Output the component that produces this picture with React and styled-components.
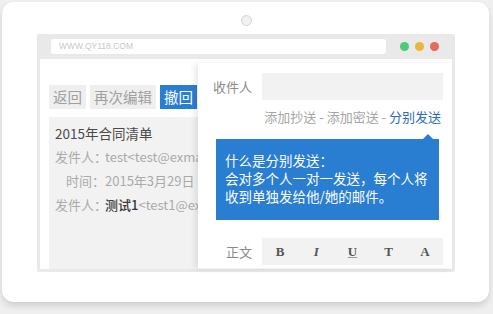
import React from "react";
import styled, { createGlobalStyle } from "styled-components";

const Global = createGlobalStyle`
  html, body { margin: 0; padding: 0; background: #efefef; }
  body {
    font-family: "Noto Sans CJK SC", "Liberation Sans", sans-serif;
    text-spacing-trim: space-all;
  }
  * { box-sizing: border-box; }
`;

const Page = styled.div`
  width: 493px;
  height: 314px;
  padding: 2px 4px 0 2px;
`;

const Device = styled.div`
  width: 487px;
  height: 300px;
  background: #fff;
  border-radius: 12px;
  box-shadow: 0 4px 6px rgba(0, 0, 0, 0.13);
  display: flex;
  flex-direction: column;
  align-items: flex-start;
  padding: 13px 0 0 35px;
`;

const Camera = styled.div`
  width: 11px;
  height: 11px;
  border-radius: 50%;
  background: #f1f1f1;
  border: 1px solid #d4d4d4;
  margin-left: 204px;
`;

const Frame = styled.div`
  margin-top: 8px;
  width: 418px;
  height: 238px;
  background: #e9e9e9;
  border-radius: 2px;
  padding: 0 3px 3px;
  display: flex;
  flex-direction: column;
`;

const TopBar = styled.div`
  height: 25px;
  display: flex;
  align-items: center;
  padding: 0 13px 0 11px;
`;

const Url = styled.div`
  width: 335px;
  height: 15px;
  background: #fff;
  border-radius: 3px;
  color: #c8c8c8;
  font-family: "Liberation Sans", sans-serif;
  font-size: 8.5px;
  line-height: 15px;
  padding-left: 8px;
`;

const Dots = styled.div`
  margin-left: auto;
  display: flex;
  gap: 6px;
`;

const Dot = styled.span`
  width: 9px;
  height: 9px;
  border-radius: 50%;
  background: ${(p) => p.$c};
`;

const Content = styled.div`
  flex: 1;
  background: #fff;
  display: flex;
  min-height: 0;
`;

const LeftPane = styled.div`
  width: 158px;
  flex: none;
  overflow: hidden;
  padding: 26px 0 0 9px;
  display: flex;
  flex-direction: column;
`;

const Buttons = styled.div`
  display: flex;
  gap: 4px;
`;

const Btn = styled.div`
  height: 24px;
  padding: 0 4px;
  font-size: 14.5px;
  line-height: 24px;
  background: ${(p) => (p.$primary ? "#2a7ed2" : "#efefef")};
  color: ${(p) => (p.$primary ? "#fff" : "#a0a0a0")};
  white-space: nowrap;
`;

const MailBox = styled.div`
  margin-top: 8px;
  flex: 1;
  width: 220px;
  background: #f2f2f2;
  padding: 4px 0 0 6px;
  font-size: 13px;
  white-space: nowrap;
`;

const Title = styled.div`
  color: #4a4a4a;
  line-height: 24px;
  font-size: 13.5px;
`;

const Meta = styled.div`
  display: flex;
  line-height: 24px;
  color: #aaa;
`;

const MetaLabel = styled.span`
  width: 50px;
  text-align: right;
  flex: none;
  margin-right: 0;
`;

const Strong = styled.span`
  color: #3a3a3a;
  font-weight: 500;
`;

const Panel = styled.div`
  flex: 1;
  margin: 4px 0 1px;
  background: #fff;
  box-shadow: -3px 1px 6px rgba(0, 0, 0, 0.09);
  padding: 10px 9px 0 15px;
  display: flex;
  flex-direction: column;
  position: relative;
  z-index: 1;
`;

const Row = styled.div`
  display: flex;
  align-items: center;
  gap: 10px;
`;

const Label = styled.div`
  width: 39px;
  text-align: right;
  font-size: 13px;
  color: #8a8a8a;
  flex: none;
`;

const Field = styled.div`
  flex: 1;
  height: 27px;
  background: #f2f2f2;
`;

const Links = styled.div`
  margin-top: 8px;
  text-align: right;
  padding-right: 2px;
  font-size: 13px;
  line-height: 18px;
  color: #a5a5a5;
  white-space: nowrap;
`;

const Link = styled.span`
  color: #2a6cc2;
`;

const Tip = styled.div`
  position: relative;
  margin: 13px 4px 0 3px;
  height: 81px;
  background: #2a7ed2;
  color: #fff;
  font-size: 13.5px;
  line-height: 18px;
  padding: 12px 0 0 9px;
  white-space: nowrap;
  &::before {
    content: "";
    position: absolute;
    top: -5px;
    right: 6px;
    border-left: 5px solid transparent;
    border-right: 5px solid transparent;
    border-bottom: 5px solid #2a7ed2;
  }
`;

const EditorRow = styled(Row)`
  margin-top: 18px;
`;

const Toolbar = styled.div`
  flex: 1;
  height: 27px;
  background: #f2f2f2;
  display: grid;
  grid-template-columns: repeat(5, 1fr);
  align-items: center;
  justify-items: center;
  font-family: "Liberation Serif", serif;
  font-size: 13px;
  color: #555;
`;

const Tool = styled.span`
  font-weight: bold;
  font-style: ${(p) => (p.$i ? "italic" : "normal")};
  text-decoration: ${(p) => (p.$u ? "underline" : "none")};
  text-decoration-color: #999;
`;

export default function App() {
  return (
    <>
      <Global />
      <Page>
        <Device>
          <Camera />
          <Frame>
            <TopBar>
              <Url>WWW.QY118.COM</Url>
              <Dots>
                <Dot $c="#4fc97a" />
                <Dot $c="#e9b63b" />
                <Dot $c="#e36a5c" />
              </Dots>
            </TopBar>
            <Content>
              <LeftPane>
                <Buttons>
                  <Btn>返回</Btn>
                  <Btn>再次编辑</Btn>
                  <Btn $primary>撤回</Btn>
                </Buttons>
                <MailBox>
                  <Title>2015年合同清单</Title>
                  <Meta>
                    <MetaLabel>发件人：</MetaLabel>
                    <span>test&lt;test@exmail.qq.com&gt;</span>
                  </Meta>
                  <Meta>
                    <MetaLabel>时间：</MetaLabel>
                    <span>2015年3月29日 (星期日)</span>
                  </Meta>
                  <Meta>
                    <MetaLabel>发件人：</MetaLabel>
                    <span>
                      <Strong>测试1</Strong>&lt;test1@exmail.qq.com&gt;
                    </span>
                  </Meta>
                </MailBox>
              </LeftPane>
              <Panel>
                <Row>
                  <Label>收件人</Label>
                  <Field />
                </Row>
                <Links>
                  添加抄送 - 添加密送 - <Link>分别发送</Link>
                </Links>
                <Tip>
                  什么是分别发送：
                  <br />
                  会对多个人一对一发送，每个人将
                  <br />
                  收到单独发给他/她的邮件。
                </Tip>
                <EditorRow>
                  <Label>正文</Label>
                  <Toolbar>
                    <Tool>B</Tool>
                    <Tool $i>I</Tool>
                    <Tool $u>U</Tool>
                    <Tool>T</Tool>
                    <Tool>A</Tool>
                  </Toolbar>
                </EditorRow>
              </Panel>
            </Content>
          </Frame>
        </Device>
      </Page>
    </>
  );
}
